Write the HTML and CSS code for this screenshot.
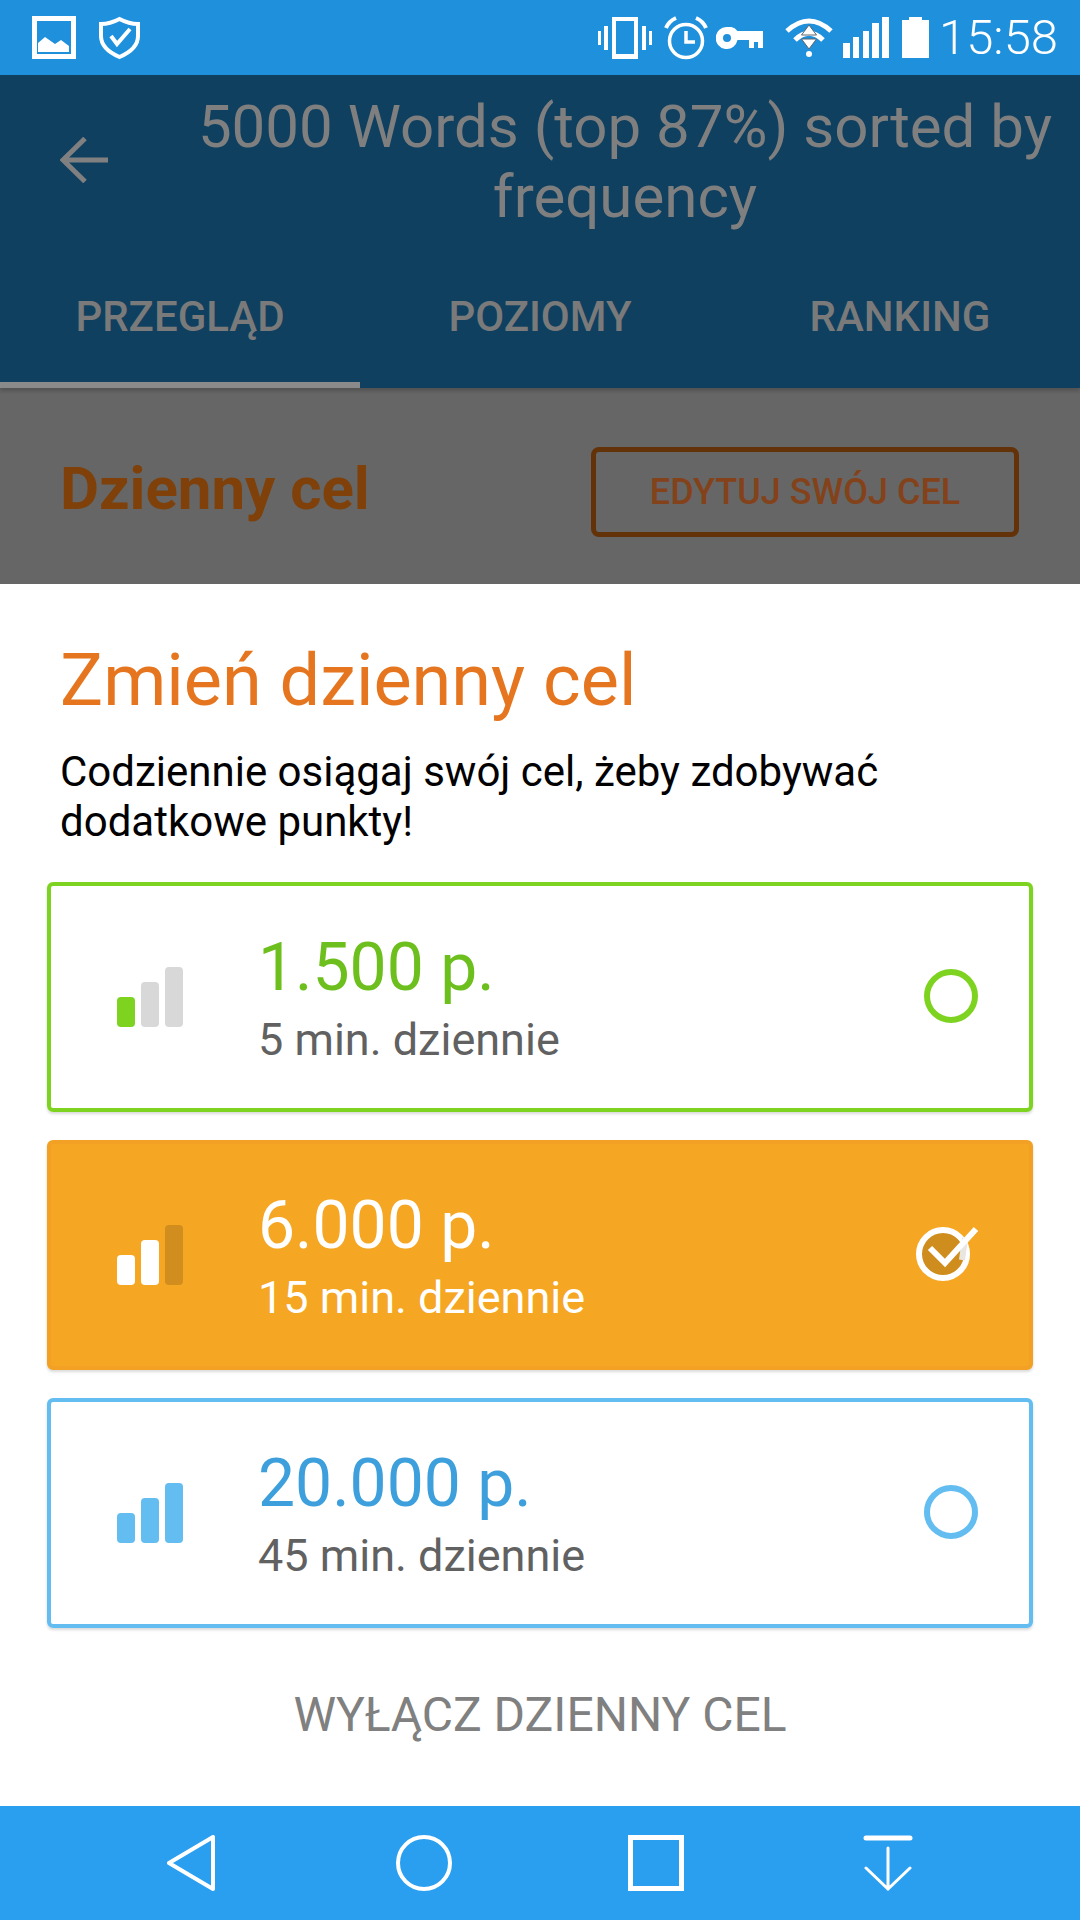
FILE: index.html
```html
<!DOCTYPE html>
<html lang="pl">
<head>
  <meta charset="UTF-8">
  <meta name="viewport" content="width=device-width, initial-scale=1.0">
  <title>Zmień dzienny cel</title>
  <link rel="stylesheet" href="styles.css">
</head>
<body>
  <div class="status-bar">
    <div class="status-left">
      <svg class="ic" width="44" height="44" viewBox="0 0 44 44"><path fill="#fff" fill-rule="evenodd" d="M0 0h44v43H0zM5 5v33h34V5zM6 36v-9l7-6 10 7 6-4 8 6v6z"/></svg>
      <svg class="ic" width="42" height="44" viewBox="0 0 42 44" fill="none" stroke="#fff" stroke-width="4"><path d="M20.500 3Q30 8 39 8V20Q39 33 20.500 41Q2 33 2 20V8Q11 8 20.500 3z"/><path d="M12 20l6 8 13-15"/></svg>
    </div>
    <div class="status-right">
      <svg class="ic" width="54" height="44" viewBox="0 0 54 44" fill="#fff"><path fill-rule="evenodd" d="M14 1h26v42H14zM18 5v33h18V5z"/><rect x="0" y="15" width="3" height="14"/><rect x="6" y="10" width="4" height="24"/><rect x="44" y="10" width="4" height="24"/><rect x="51" y="15" width="3" height="14"/></svg>
      <svg class="ic alarm" width="44" height="44" viewBox="0 0 44 44" fill="none" stroke="#fff" stroke-width="3.500"><circle cx="22" cy="25" r="16.500"/><path d="M22 15v11h9"/><path stroke-width="4" d="M2 12Q5 5 12 2M42 12Q39 5 32 2"/></svg>
      <svg class="ic key" width="48" height="22" viewBox="0 0 48 22"><path fill="#fff" fill-rule="evenodd" d="M11 0a11 11 0 0 1 10.500 4H47v9h0v8h-5v-6h-4v6h-5v-8H21.500A11 11 0 1 1 11 0zm0 7a4 4 0 1 0 0 8 4 4 0 0 0 0-8z"/></svg>
      <svg class="ic wifi" width="48" height="40" viewBox="0 0 48 40"><path fill="none" stroke="#fff" stroke-width="5" d="M2 13Q24-7 46 13M10 22Q24 8 38 22"/><path fill="#fff" stroke="#59656d" stroke-width="1" d="M24 7l7.500 10h-15zM16.500 21h15L24 31z"/><circle cx="24" cy="36" r="3" fill="#fff"/></svg>
      <svg class="ic signal" width="46" height="41" viewBox="0 0 46 41" fill="#fff"><rect x="0" y="26" width="7" height="15"/><rect x="10" y="20" width="6" height="21"/><rect x="20" y="14" width="6" height="27"/><rect x="29" y="6" width="7" height="35"/><rect x="39" y="0" width="7" height="41"/></svg>
      <svg class="ic battery" width="27" height="41" viewBox="0 0 27 41"><path fill="#fff" d="M7 0h13v3h7v38H0V3h7z"/></svg>
      <span class="clock">15:58</span>
    </div>
  </div>

  <header class="app-bar">
    <div class="title-row">
      <svg class="back" width="48" height="46" viewBox="0 0 48 46" fill="none" stroke="#808080" stroke-width="5"><path d="M48 23H3M25 1.500 3 23l22 21.500"/></svg>
      <h1 class="app-title">5000 Words (top 87%) sorted by frequency</h1>
    </div>
    <nav class="tabs">
      <div class="tab tab-active">PRZEGLĄD</div>
      <div class="tab">POZIOMY</div>
      <div class="tab">RANKING</div>
    </nav>
  </header>

  <section class="goal-row">
    <h2 class="goal-title">Dzienny cel</h2>
    <div class="goal-edit">EDYTUJ SWÓJ CEL</div>
  </section>

  <main class="sheet">
    <h2 class="sheet-title">Zmień dzienny cel</h2>
    <p class="sheet-desc">Codziennie osiągaj swój cel, żeby zdobywać dodatkowe punkty!</p>

    <div class="options">
      <div class="option option-green">
        <div class="bars"><i class="bar b1 on"></i><i class="bar b2"></i><i class="bar b3"></i></div>
        <div class="option-text">
          <div class="points">1.500 p.</div>
          <div class="time">5 min. dziennie</div>
        </div>
        <div class="radio"></div>
      </div>

      <div class="option option-orange">
        <div class="bars"><i class="bar b1 on"></i><i class="bar b2 on"></i><i class="bar b3"></i></div>
        <div class="option-text">
          <div class="points">6.000 p.</div>
          <div class="time">15 min. dziennie</div>
        </div>
        <svg class="check" width="64" height="66" viewBox="0 0 64 66" fill="none"><circle cx="27" cy="39" r="24" fill="#cf8d1e" stroke="#fff" stroke-width="6"/><path stroke="#e9e6e0" stroke-width="6" d="M49 23l-3 22"/><path stroke="#fff" stroke-width="6" d="M14 33l15 15L60 14"/></svg>
      </div>

      <div class="option option-blue">
        <div class="bars"><i class="bar b1 on"></i><i class="bar b2 on"></i><i class="bar b3 on"></i></div>
        <div class="option-text">
          <div class="points">20.000 p.</div>
          <div class="time">45 min. dziennie</div>
        </div>
        <div class="radio"></div>
      </div>
    </div>

    <div class="turn-off">WYŁĄCZ DZIENNY CEL</div>
  </main>

  <footer class="nav-bar">
    <svg class="nav-back" width="48" height="56" viewBox="0 0 48 56" fill="none" stroke="#fff" stroke-width="4" stroke-linejoin="round"><path d="M46 2v52L2 28z"/></svg>
    <svg class="nav-home" width="56" height="56" viewBox="0 0 56 56" fill="none" stroke="#fff" stroke-width="4"><circle cx="28" cy="28" r="26"/></svg>
    <svg class="nav-recent" width="56" height="56" viewBox="0 0 56 56" fill="none" stroke="#fff" stroke-width="5"><path d="M2.500 2.500h51v51h-51z"/></svg>
    <svg class="nav-hide" width="50" height="56" viewBox="0 0 50 56" fill="none" stroke="#fff" stroke-linecap="round"><path stroke-width="5" d="M3 3h44"/><path stroke-width="3" d="M25 13v41M3 33l22 21 22-21"/></svg>
  </footer>
</body>
</html>
```

FILE: styles.css
```css
* {
  box-sizing: border-box;
}
body {
  margin: 0;
  width: 1080px;
  height: 1920px;
  font-family: Roboto, sans-serif;
  background: #fff;
  overflow: hidden;
  display: flex;
  flex-direction: column;
}
h1, h2, p {
  margin: 0;
  font-weight: 400;
}
.ic {
  display: block;
  flex: none;
}

/* status bar */
.status-bar {
  height: 75px;
  background: #1e90dc;
  display: flex;
  justify-content: space-between;
  align-items: center;
  padding: 0 22px 0 32px;
}
.status-left {
  display: flex;
  align-items: center;
  gap: 23px;
}
.status-right {
  display: flex;
  align-items: center;
}
.alarm {
  margin-left: 12px;
}
.key {
  margin-left: 8px;
}
.wifi {
  margin-left: 21px;
}
.signal {
  margin-left: 10px;
}
.battery {
  margin-left: 13px;
}
.clock {
  margin-left: 10px;
  font-size: 49px;
  font-weight: 300;
  color: #fff;
  line-height: 44px;
}

/* dimmed page behind the sheet */
.app-bar {
  height: 313px;
  background: #104060;
  display: flex;
  flex-direction: column;
  box-shadow: 0 3px 4px rgba(0, 0, 0, 0.2);
  position: relative;
}
.title-row {
  display: flex;
  align-items: flex-start;
  padding: 17px 0 0 60px;
  height: 200px;
}
.back {
  flex: none;
  margin-top: 45px;
}
.app-title {
  flex: 1;
  font-size: 60px;
  line-height: 70px;
  color: #7f7f7f;
  text-align: center;
  padding-left: 62px;
}
.tabs {
  flex: 1;
  display: grid;
  grid-template-columns: repeat(3, 360px);
}
.tab {
  font-size: 42px;
  font-weight: 500;
  color: #7a7a7a;
  text-align: center;
  padding-top: 17px;
}
.tab-active {
  border-bottom: 6px solid #8a8a8a;
}
.goal-row {
  height: 196px;
  background: #666;
  display: flex;
  justify-content: space-between;
  align-items: center;
  padding: 10px 61px 0 60px;
}
.goal-title {
  font-size: 60px;
  font-weight: 700;
  color: #7f4009;
  padding-bottom: 5px;
}
.goal-edit {
  width: 428px;
  height: 90px;
  margin-top: 2px;
  border: 5px solid #643209;
  border-radius: 8px;
  display: flex;
  align-items: center;
  justify-content: center;
  font-size: 36px;
  font-weight: 500;
  color: #84421a;
}

/* bottom sheet */
.sheet {
  flex: 1;
  padding: 57px 47px 0;
}
.sheet-title {
  font-size: 72px;
  line-height: 80px;
  color: #e5761f;
  padding-left: 13px;
}
.sheet-desc {
  font-size: 42px;
  line-height: 50px;
  color: #000;
  padding: 26px 120px 0 13px;
}
.options {
  display: flex;
  flex-direction: column;
  gap: 28px;
  margin-top: 35px;
}
.option {
  height: 230px;
  border: 4px solid;
  border-radius: 6px;
  display: flex;
  align-items: center;
  box-shadow: 0 2px 3px rgba(0, 0, 0, 0.15);
  padding-left: 66px;
}
.bars {
  display: flex;
  align-items: flex-end;
  gap: 6px;
  width: 66px;
  height: 60px;
  flex: none;
}
.bar {
  width: 18px;
  border-radius: 4px;
  background: #d8d8d8;
}
.b1 {
  height: 30px;
}
.b2 {
  height: 45px;
}
.b3 {
  height: 60px;
}
.option-text {
  flex: 1;
  margin-left: 75px;
}
.points {
  font-size: 66px;
  line-height: 76px;
}
.time {
  font-size: 45px;
  line-height: 50px;
  margin-top: 9px;
  color: #616161;
}
.radio {
  width: 54px;
  height: 54px;
  border: 6px solid;
  border-radius: 50%;
  margin-right: 51px;
  margin-top: -2px;
}
.check {
  margin-right: 49px;
  margin-top: -14px;
}
.option-green {
  border-color: #7ed321;
}
.option-green .on {
  background: #7ed321;
}
.option-green .radio {
  border-color: #7ed321;
}
.option-green .points {
  color: #6cbf1c;
}
.option-orange {
  border-color: #f2a124;
  background: #f5a623;
}
.option-orange .bar {
  background: #d18e1e;
}
.option-orange .on {
  background: #fff;
}
.option-orange .points, .option-orange .time {
  color: #fff;
}
.option-blue {
  border-color: #63bdf0;
}
.option-blue .on {
  background: #63bdf0;
}
.option-blue .radio {
  border-color: #63bdf0;
}
.option-blue .points {
  color: #3d9fdb;
}
.turn-off {
  margin-top: 62px;
  text-align: center;
  font-size: 48px;
  line-height: 50px;
  color: #808080;
}

/* android nav bar */
.nav-bar {
  height: 114px;
  flex: none;
  background: #2a9ff0;
  display: flex;
  align-items: center;
  padding-left: 167px;
}
.nav-bar svg {
  flex: none;
}
.nav-home {
  margin-left: 181px;
}
.nav-recent {
  margin-left: 176px;
}
.nav-hide {
  margin-left: 179px;
}
```
